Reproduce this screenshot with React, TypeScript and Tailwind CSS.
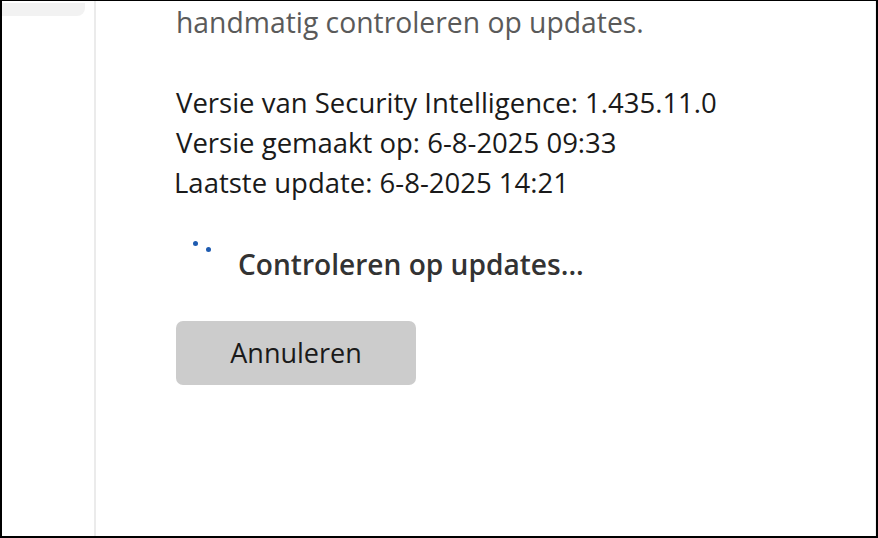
import React from "react";

export default function App() {
  return (
    <div
      className="w-[878px] h-[538px] overflow-hidden bg-white border-black border-t-[1px] border-l-[2px] border-r-[2px] border-b-[2px] flex"
      style={{ fontFamily: '"Open Sans", "Noto Sans", sans-serif' }}
    >
      <div className="w-[92px] shrink-0 pt-[2px]">
        <div className="w-[83px] h-[13px] bg-[#f2f2f2] rounded-br-[8px]" />
      </div>
      <div className="w-[2px] shrink-0 bg-[#ebebeb]" />
      <div className="flex-1 relative pl-[80px]">
        <div className="text-[28.3px] leading-[40px] text-[#5a5a5a] mt-[1px]">
          handmatig controleren op updates.
        </div>
        <div className="mt-[41px] text-[27.5px] leading-[40px] text-[#1a1a1a]">
          <div>Versie van Security Intelligence: 1.435.11.0</div>
          <div>Versie gemaakt op: 6-8-2025 09:33</div>
          <div className="-ml-[2px]">Laatste update: 6-8-2025 14:21</div>
        </div>
        <div className="mt-[28px] flex items-start">
          <div className="relative w-[62px] h-[40px] shrink-0">
            <span className="absolute left-[17px] top-[10px] w-[5px] h-[5px] rounded-full bg-[#1e5bb0]" />
            <span className="absolute left-[30px] top-[16px] w-[5px] h-[5px] rounded-full bg-[#1e5bb0]" />
          </div>
          <div className="text-[28.1px] leading-[40px] font-semibold text-[#333333] mt-[13px]">
            Controleren op updates...
          </div>
        </div>
        <button className="mt-[37px] w-[240px] h-[64px] rounded-[7px] bg-[#cccccc] text-[27px] text-[#1a1a1a] flex items-center justify-center">
          Annuleren
        </button>
        <div className="absolute right-[0px] top-0 bottom-0 w-[1px] bg-[#f0f0f0]" />
      </div>
    </div>
  );
}
